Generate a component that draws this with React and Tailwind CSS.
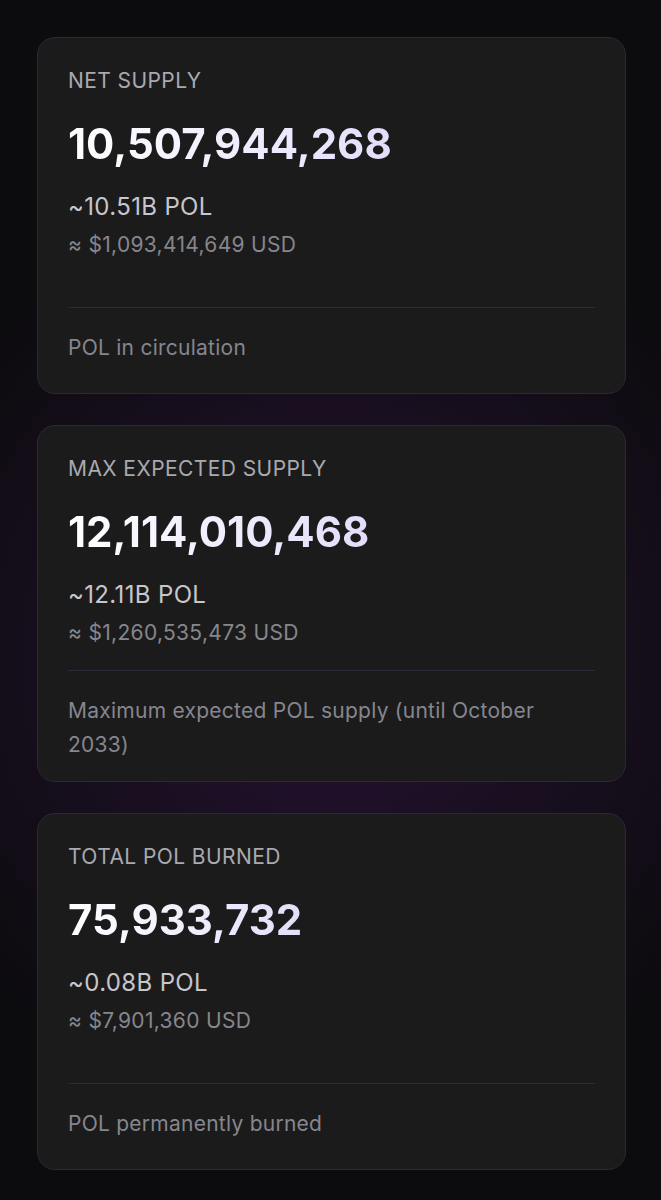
const cards = [
  {
    label: "NET SUPPLY",
    value: "10,507,944,268",
    approx: "~10.51B POL",
    usd: "≈ $1,093,414,649 USD",
    desc: "POL in circulation",
    pb: "pb-[28px]",
  },
  {
    label: "MAX EXPECTED SUPPLY",
    value: "12,114,010,468",
    approx: "~12.11B POL",
    usd: "≈ $1,260,535,473 USD",
    desc: "Maximum expected POL supply (until October 2033)",
    pb: "pb-[19px]",
  },
  {
    label: "TOTAL POL BURNED",
    value: "75,933,732",
    approx: "~0.08B POL",
    usd: "≈ $7,901,360 USD",
    desc: "POL permanently burned",
    pb: "pb-[28px]",
  },
];

function StatCard({ label, value, approx, usd, desc, pb }) {
  return (
    <div className="flex h-[357px] flex-col rounded-[18px] border border-[#2b2839] bg-[#1b1b1c] px-[30px] pt-[30px]">
      <div className="text-[21px] leading-[26px] tracking-[0.02em] text-[#a9a9b0]">{label}</div>
      <div className="mt-[25px] text-[42px] font-bold leading-[50px]">
        <span className="inline-block bg-gradient-to-r from-white to-[#e4ddfa] bg-clip-text text-transparent">
          {value}
        </span>
      </div>
      <div className="mt-[23px] text-[24px] leading-[30px] tracking-[0.015em] text-[#c6c6cb]">{approx}</div>
      <div className="mt-[9px] text-[21px] leading-[28px] tracking-[0.015em] text-[#86868d]">{usd}</div>
      <div className={`mt-auto border-t border-[#292c36] pt-[23px] ${pb}`}>
        <div className="text-[21px] leading-[34px] tracking-[0.012em] text-[#86868e]">{desc}</div>
      </div>
    </div>
  );
}

export default function App() {
  return (
    <div
      className="min-h-[1200px] w-full bg-[#0c0b0e] bg-[radial-gradient(ellipse_70%_40%_at_50%_55%,rgba(70,28,96,0.45),rgba(12,11,14,0)_100%)] pb-[30px] pl-[37px] pr-[35px] pt-[37px]"
      style={{ fontFamily: "Inter, 'Noto Sans', sans-serif" }}
    >
      <div className="flex flex-col gap-[31px]">
        {cards.map((c) => (
          <StatCard key={c.label} {...c} />
        ))}
      </div>
    </div>
  );
}
